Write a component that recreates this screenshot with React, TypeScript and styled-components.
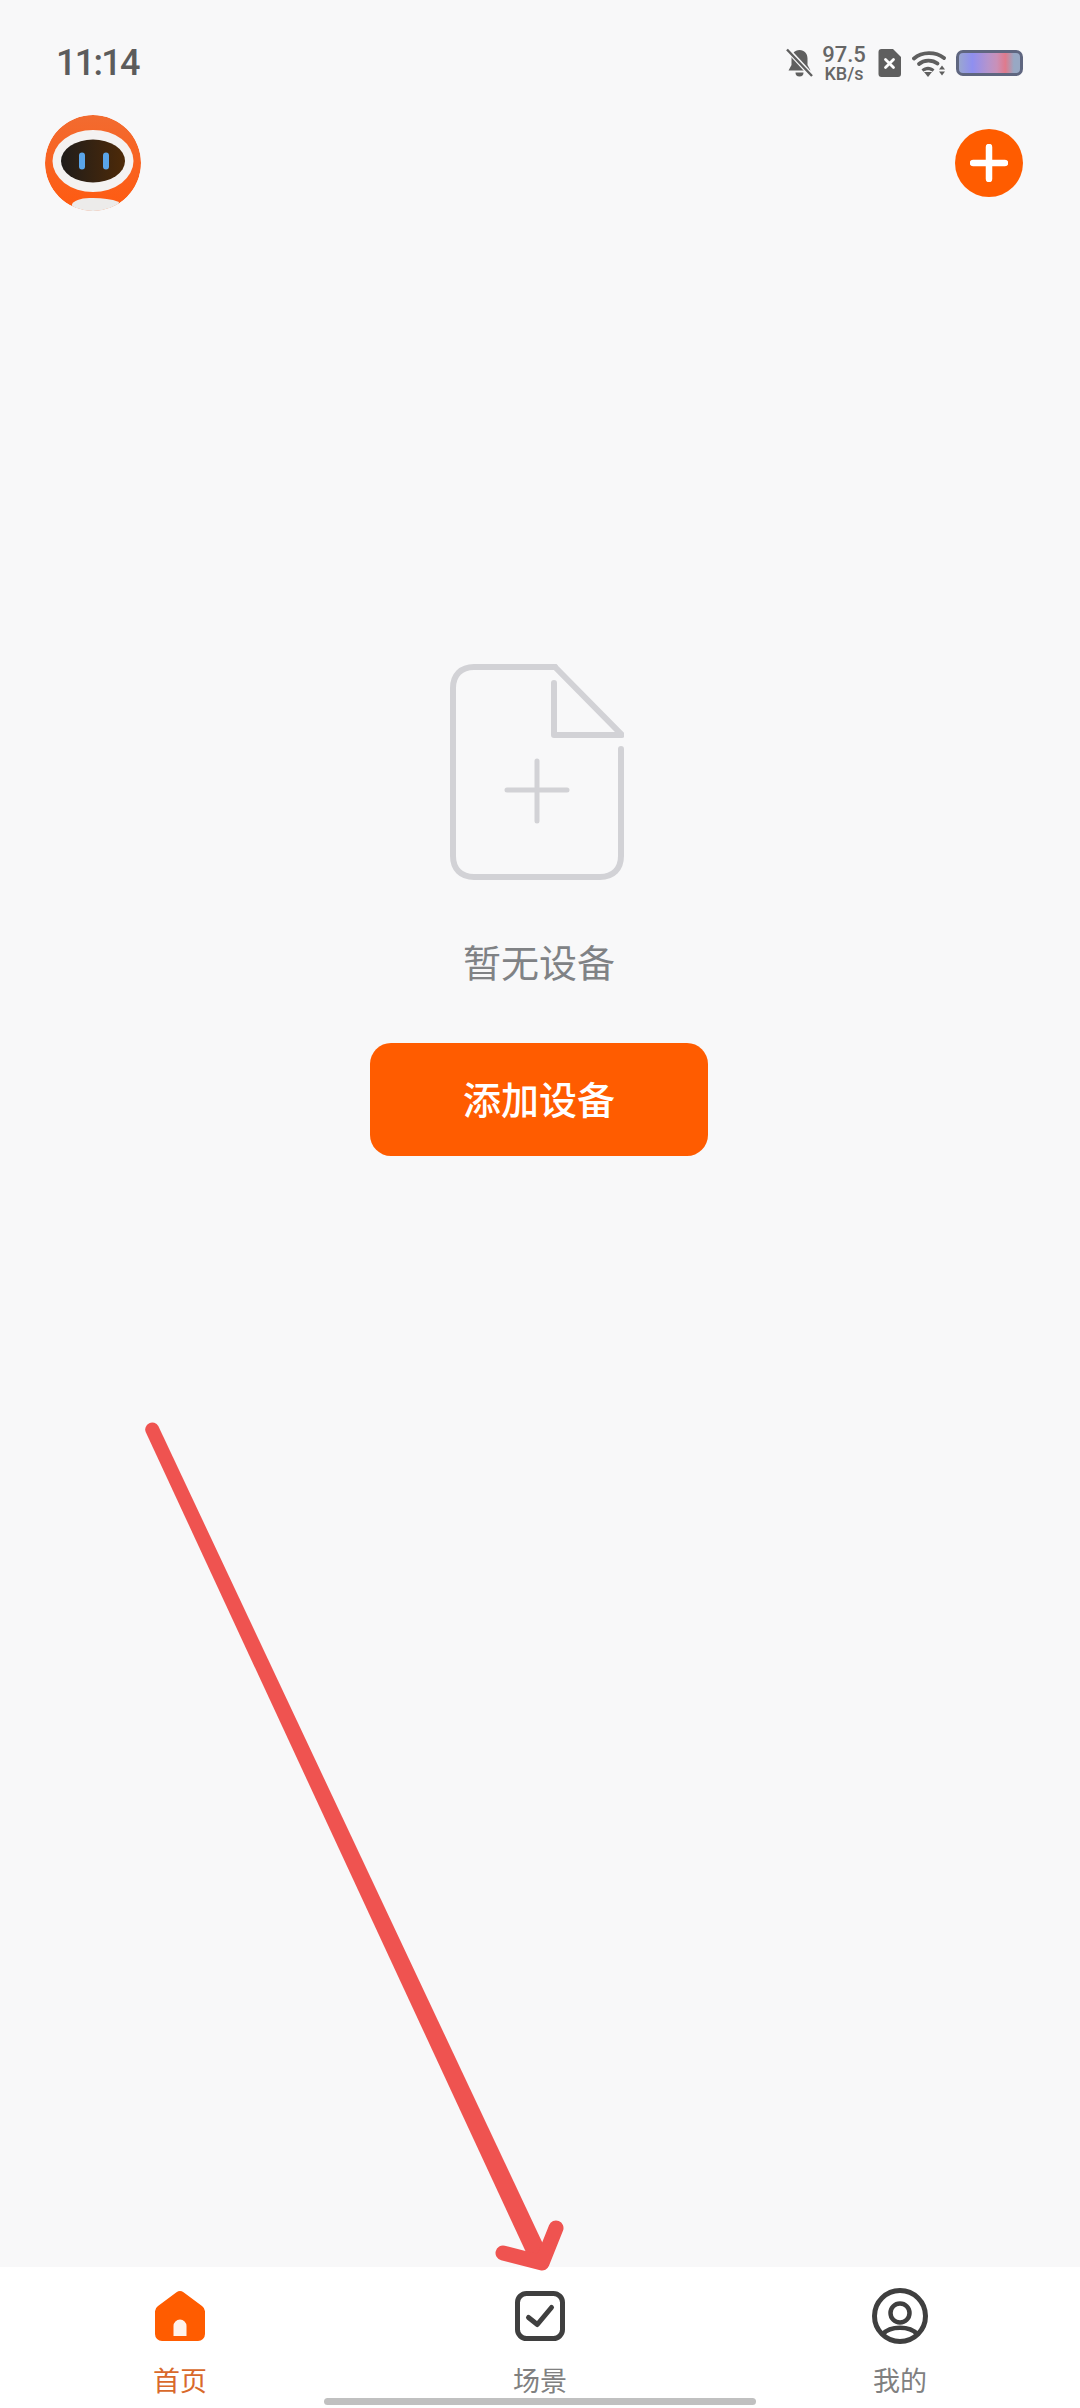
import React from "react";
import styled, { createGlobalStyle } from "styled-components";

const Global = createGlobalStyle`
  html, body { margin: 0; padding: 0; background: #f8f8f9; }
  * { box-sizing: border-box; }
  body { font-family: "Noto Sans CJK SC", "Noto Sans", sans-serif; }
`;

const Page = styled.div`
  position: relative;
  width: 1080px;
  height: 2408px;
  display: flex;
  flex-direction: column;
  background: #f8f8f9;
  overflow: hidden;
`;

const StatusBar = styled.div`
  height: 115px;
  padding: 11px 57px 0 56px;
  display: flex;
  align-items: center;
  justify-content: space-between;
`;

const Time = styled.span`
  font-family: Roboto, "Liberation Sans", sans-serif;
  font-size: 36px;
  font-weight: 500;
  line-height: 40px;
  color: #5c5c5c;
  letter-spacing: -1.7px;
`;

const StatusIcons = styled.div`
  display: flex;
  align-items: center;
  color: #5f5f5f;
`;

const Speed = styled.div`
  display: flex;
  flex-direction: column;
  align-items: center;
  width: 44px;
  margin: 0 12px 0 9px;
  font-family: Roboto, "Liberation Sans", sans-serif;
  font-weight: 500;
  color: #666;
`;

const SpeedValue = styled.span`
  font-size: 22px;
  line-height: 21px;
`;

const SpeedUnit = styled.span`
  font-size: 18px;
  line-height: 18px;
`;

const StatusGlyph = styled.svg<{ $gap?: number }>`
  display: block;
  margin-left: ${(p) => p.$gap ?? 0}px;
  flex: none;
`;

const Battery = styled.div`
  width: 67px;
  height: 26px;
  margin-left: 10px;
  border: 3px solid #5f6680;
  border-radius: 7px;
  background: linear-gradient(90deg, #9aa6d0 0%, #8f8ff0 22%, #b694cc 48%, #c990b8 62%, #e07a8c 76%, #98a8c4 90%);
`;

const Header = styled.header`
  height: 96px;
  padding: 0 57px 0 45px;
  display: flex;
  align-items: center;
  justify-content: space-between;
`;

const Avatar = styled.svg`
  display: block;
  width: 96px;
  height: 96px;
`;

const AddRound = styled.button`
  width: 68px;
  height: 68px;
  padding: 0;
  border: 0;
  border-radius: 50%;
  background: #ff5c00;
  display: flex;
  align-items: center;
  justify-content: center;
`;

const Main = styled.main`
  flex: 1;
  padding-top: 453px;
  display: flex;
  flex-direction: column;
  align-items: center;
`;

const EmptyIcon = styled.svg`
  display: block;
  width: 174px;
  height: 216px;
  margin-left: -6px;
`;

const EmptyText = styled.p`
  margin: 54px 0 0 -2px;
  font-size: 38px;
  line-height: 54px;
  color: #808285;
`;

const AddButton = styled.button`
  margin: 55px 0 0 -2px;
  padding: 0 0 5px;
  width: 338px;
  height: 113px;
  border: 0;
  border-radius: 21px;
  background: #ff5c00;
  color: #fff;
  font-family: "Noto Sans CJK SC", sans-serif;
  font-size: 38px;
  font-weight: 500;
`;

const TabBar = styled.nav`
  height: 141px;
  padding-top: 22px;
  background: #fff;
  display: grid;
  grid-template-columns: repeat(3, 360px);
`;

const Tab = styled.div`
  display: flex;
  flex-direction: column;
  align-items: center;
`;

const TabIcon = styled.div`
  height: 54px;
  display: flex;
  align-items: center;
  justify-content: center;
`;

const TabLabel = styled.span<{ $active?: boolean }>`
  margin-top: 17px;
  font-size: 27px;
  line-height: 40px;
  color: ${(p) => (p.$active ? "#d9692b" : "#808080")};
`;

const HomeIndicator = styled.div`
  position: absolute;
  left: 324px;
  top: 2398px;
  width: 432px;
  height: 7px;
  border-radius: 4px;
  background: #c0c0c0;
`;

const ArrowOverlay = styled.svg`
  position: absolute;
  left: 0;
  top: 0;
  pointer-events: none;
`;

export default function App() {
  return (
    <Page>
      <Global />
      <StatusBar>
        <Time>11:14</Time>
        <StatusIcons>
          <StatusGlyph width="27" height="30" viewBox="0 0 27 30">
            <path d="M13.5 2c-5 0-8 3.6-8 8.5v6.5L2.5 22.5h22L21.5 17v-6.5C21.5 5.6 18.5 2 13.5 2z" fill="#5f5f5f" />
            <path d="M9.5 24.5a4 4 0 0 0 8 0z" fill="#5f5f5f" />
            <path d="M1 1 L26 28" stroke="#f8f8f9" strokeWidth="5" />
            <path d="M1 1.5 L26 28" stroke="#5f5f5f" strokeWidth="2.4" />
          </StatusGlyph>
          <Speed>
            <SpeedValue>97.5</SpeedValue>
            <SpeedUnit>KB/s</SpeedUnit>
          </Speed>
          <StatusGlyph width="23" height="28" viewBox="0 0 23 28">
            <path d="M3.5 0H15L23 8v17a3 3 0 0 1-3 3H3.500a3 3 0 0 1-3-3V3a3 3 0 0 1 3-3z" fill="#5f5f5f" />
            <path d="M7.500 10.500l8 8M15.500 10.500l-8 8" stroke="#fff" strokeWidth="2.800" strokeLinecap="round" />
          </StatusGlyph>
          <StatusGlyph $gap={11} width="34" height="27" viewBox="0 0 34 27">
            <g fill="none" stroke="#5f5f5f" strokeWidth="3.800" strokeLinecap="round">
              <path d="M2 8.500C10 1.500 23.500 1.500 32 8" />
              <path d="M7 14C12 9.500 20.500 9.500 25.500 13.500" />
            </g>
            <path d="M9.500 19.500c4-3.600 9-3.600 13 0l-2 2.200c-2.600-2-6.400-2-9 0z" fill="#5f5f5f" />
            <path d="M12 22h8L16 27z" fill="#5f5f5f" />
            <path d="M27 19.500l3-4 3 4zM27 21.500h6l-3 4z" fill="#5f5f5f" />
          </StatusGlyph>
          <Battery />
        </StatusIcons>
      </StatusBar>

      <Header>
        <Avatar viewBox="0 0 96 96">
          <defs>
            <linearGradient id="visor" x1="0" x2="1" y1="0" y2="0">
              <stop offset="0" stopColor="#1f1c1a" />
              <stop offset="1" stopColor="#4e2a08" />
            </linearGradient>
            <linearGradient id="shell" x1="0" x2="0" y1="0" y2="1">
              <stop offset="0" stopColor="#f26b30" />
              <stop offset="1" stopColor="#ff5a10" />
            </linearGradient>
            <clipPath id="avatarClip">
              <circle cx="48" cy="48" r="48" />
            </clipPath>
          </defs>
          <g clipPath="url(#avatarClip)">
            <circle cx="48" cy="48" r="48" fill="url(#shell)" />
            <ellipse cx="48" cy="46" rx="40.500" ry="31" fill="#f4f2f1" />
            <ellipse cx="48" cy="46" rx="32" ry="21.500" fill="url(#visor)" />
            <rect x="34" y="37.500" width="6" height="17" rx="3" fill="#5aa5ea" />
            <rect x="58" y="37.500" width="6" height="17" rx="3" fill="#5aa5ea" />
            <path d="M27 89C31 84 38 83 48 83C58 83 66 84 74 87L70 100H28z" fill="#ecebea" />
          </g>
        </Avatar>
        <AddRound aria-label="add">
          <svg width="38" height="38" viewBox="0 0 38 38">
            <path d="M3 19h32M19 3v32" stroke="#fff" strokeWidth="6.500" strokeLinecap="round" />
          </svg>
        </AddRound>
      </Header>

      <Main>
        <EmptyIcon viewBox="0 0 174 216" fill="none" stroke="#d2d2d6" strokeWidth="6">
          <path d="M105 3H24C11 3 3 11 3 24V192c0 13 8 21 21 21H150c13 0 21-8 21-21V85" strokeLinecap="round" />
          <path d="M105 3L172 71H104V19" strokeLinejoin="round" strokeLinecap="round" />
          <path d="M57 126H117M87 97V157" strokeWidth="5" strokeLinecap="round" />
        </EmptyIcon>
        <EmptyText>暂无设备</EmptyText>
        <AddButton>添加设备</AddButton>
      </Main>

      <TabBar>
        <Tab>
          <TabIcon>
            <svg width="50" height="50" viewBox="0 0 50 50">
              <path d="M21.500 1.300a6 6 0 0 1 7 0L47 15a7 7 0 0 1 3 6V43a7 7 0 0 1-7 7H7a7 7 0 0 1-7-7V21a7 7 0 0 1 3-6z" fill="#ff5c00" />
              <path d="M18.500 45V35a6.500 6.500 0 0 1 13 0V45z" fill="#fff3ea" />
            </svg>
          </TabIcon>
          <TabLabel $active>首页</TabLabel>
        </Tab>
        <Tab>
          <TabIcon>
            <svg width="50" height="50" viewBox="0 0 50 50" fill="none" stroke="#3f3f3f">
              <rect x="2.500" y="2.500" width="45" height="45" rx="9" strokeWidth="5" />
              <path d="M13.500 26.500L22.300 33.500L36.500 16.500" strokeWidth="5" strokeLinecap="round" strokeLinejoin="round" />
            </svg>
          </TabIcon>
          <TabLabel>场景</TabLabel>
        </Tab>
        <Tab>
          <TabIcon>
            <svg width="56" height="56" viewBox="0 0 56 56" fill="none" stroke="#3f3f3f">
              <circle cx="28" cy="28" r="25.500" strokeWidth="5" />
              <circle cx="28" cy="25" r="9.500" strokeWidth="4.500" />
              <path d="M11 46C18 37.500 38 37.500 45 46" strokeWidth="4.500" />
            </svg>
          </TabIcon>
          <TabLabel>我的</TabLabel>
        </Tab>
      </TabBar>

      <HomeIndicator />

      <ArrowOverlay width="1080" height="2408" viewBox="0 0 1080 2408" fill="none">
        <path d="M145.700 1432A7 7 0 0 1 158.300 1426L549.600 2258L532.400 2266Z" fill="#ef5350" />
        <path d="M503 2253L542 2263L556 2228" stroke="#ef5350" strokeWidth="15" strokeLinecap="round" strokeLinejoin="round" />
      </ArrowOverlay>
    </Page>
  );
}
